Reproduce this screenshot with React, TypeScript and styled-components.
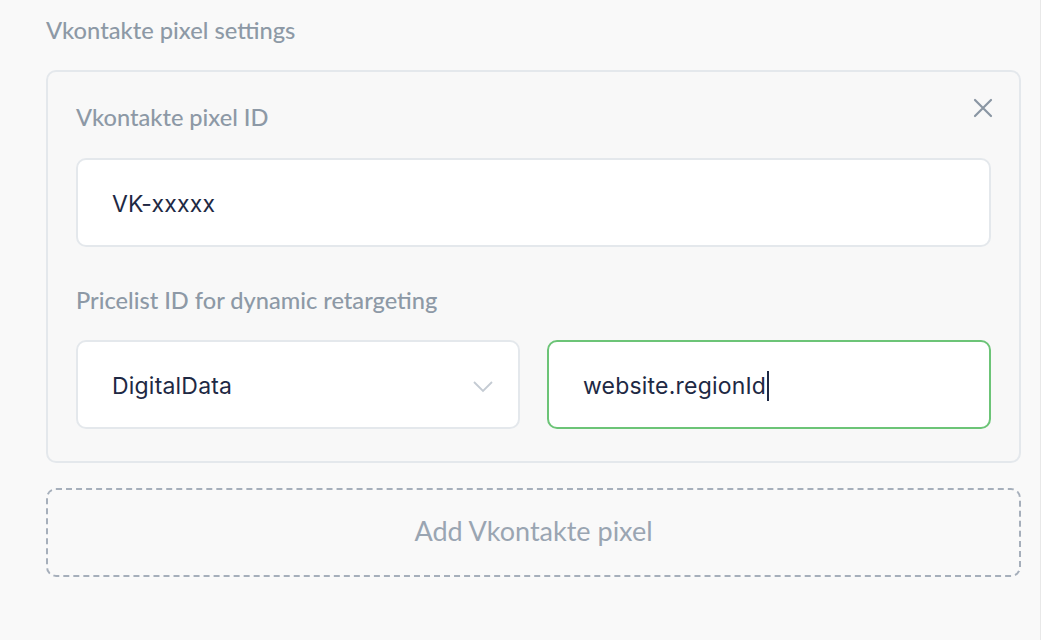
import React from "react";
import styled, { createGlobalStyle } from "styled-components";

const Global = createGlobalStyle`
  html, body { margin: 0; padding: 0; background: #ffffff; }
  body { font-family: Lato, "Open Sans", sans-serif; }
  * { box-sizing: border-box; }
`;

const Page = styled.div`
  width: 1041px;
  height: 640px;
  background: #f9f9f9;
  border-right: 1px solid #e8e8e8;
  padding: 18px 19px 0 46px;
  display: flex;
  flex-direction: column;
`;

const Title = styled.div`
  font-size: 23.7px;
  line-height: 24px;
  color: #8d99a6;
  font-weight: 500;
`;

const Card = styled.div`
  position: relative;
  margin-top: 28px;
  border: 2px solid #e4e8ec;
  border-radius: 10px;
  background: #f8f8f8;
  padding: 34px 28px 32px 28px;
  display: flex;
  flex-direction: column;
`;

const Label = styled.div<{ $gap: number; $top?: number }>`
  font-size: 23.6px;
  line-height: 22px;
  color: #8d99a6;
  font-weight: 500;
  margin-top: ${(p) => p.$top ?? 0}px;
  margin-bottom: ${(p) => p.$gap}px;
`;

const Field = styled.div<{ $active?: boolean }>`
  height: 89px;
  flex: 0 0 89px;
  background: #ffffff;
  border: 2px solid ${(p) => (p.$active ? "#6cc477" : "#e4e8ec")};
  border-radius: 10px;
  padding: 2px 34px 0 34px;
  display: flex;
  align-items: center;
  font-family: Inter, "Liberation Sans", sans-serif;
  font-size: 23px;
  letter-spacing: 0.2px;
  color: #1e2944;
`;

const Row = styled.div`
  display: flex;
  gap: 27px;
  & > ${Field} {
    flex: 1 1 0;
  }
`;

const Chevron = styled.svg`
  margin-left: auto;
  margin-right: -10px;
`;

const Caret = styled.span`
  display: inline-block;
  width: 2px;
  height: 30px;
  background: #1e2944;
  margin-left: 1px;
`;

const Close = styled.button`
  position: absolute;
  top: 25px;
  right: 25px;
  width: 22px;
  height: 22px;
  padding: 0;
  border: none;
  background: transparent;
  display: flex;
  align-items: center;
  justify-content: center;
`;

const AddButton = styled.button`
  margin-top: 25px;
  height: 89px;
  padding: 0 0 4px 0;
  border: 2px dashed #a6afbb;
  border-radius: 10px;
  background: transparent;
  font-family: Lato, "Open Sans", sans-serif;
  font-size: 27px;
  color: #9aa5b2;
  display: flex;
  align-items: center;
  justify-content: center;
`;

export default function App() {
  return (
    <>
      <Global />
      <Page>
        <Title>Vkontakte pixel settings</Title>
        <Card>
          <Close aria-label="Remove">
            <svg width="20" height="20" viewBox="0 0 20 20">
              <path d="M2 2 L18 18 M18 2 L2 18" stroke="#8a96a3" strokeWidth="2.2" strokeLinecap="round" />
            </svg>
          </Close>
          <Label $gap={30}>Vkontakte pixel ID</Label>
          <Field>VK-xxxxx</Field>
          <Label $gap={29} $top={42}>Pricelist ID for dynamic retargeting</Label>
          <Row>
            <Field>
              DigitalData
              <Chevron width="22" height="14" viewBox="0 0 22 14">
                <path d="M2 3 L11 12 L20 3" stroke="#c4cbd3" strokeWidth="1.8" fill="none" />
              </Chevron>
            </Field>
            <Field $active>
              website.regionId
              <Caret />
            </Field>
          </Row>
        </Card>
        <AddButton>Add Vkontakte pixel</AddButton>
      </Page>
    </>
  );
}
